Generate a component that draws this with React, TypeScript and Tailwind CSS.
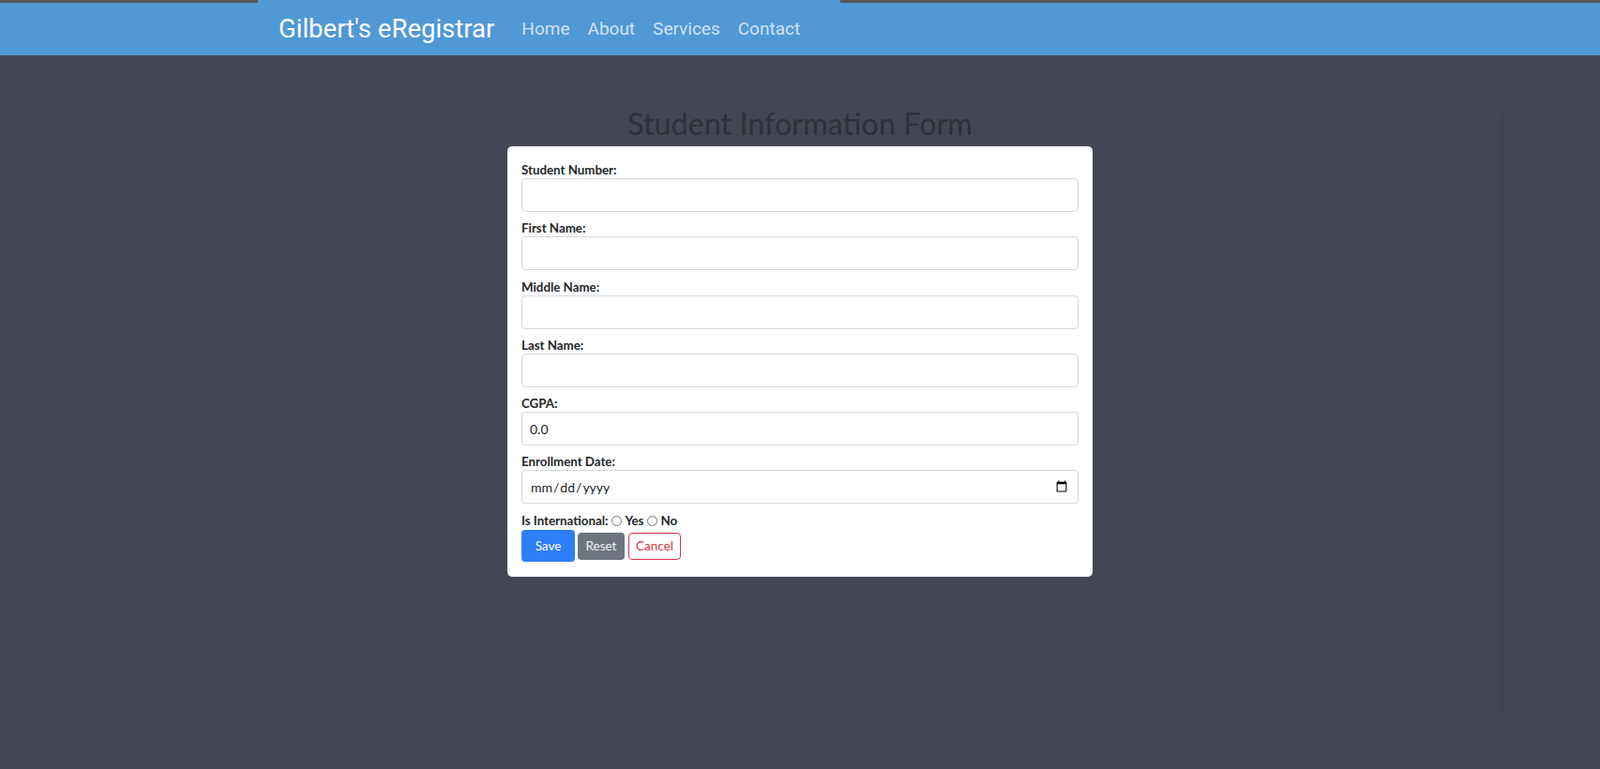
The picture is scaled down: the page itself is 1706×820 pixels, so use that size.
import React from 'react'

const fields = [
  { label: 'Student Number:', type: 'text', value: '' },
  { label: 'First Name:', type: 'text', value: '' },
  { label: 'Middle Name:', type: 'text', value: '' },
  { label: 'Last Name:', type: 'text', value: '' },
  { label: 'CGPA:', type: 'text', value: '0.0' },
  { label: 'Enrollment Date:', type: 'date', value: '' },
]

const formFont = { fontFamily: 'Lato, "Noto Sans", sans-serif' }

export default function App() {
  return (
    <div className="min-h-[820px] bg-[#454653] flex flex-col relative">
      {/* top strip */}
      <div className="flex h-[3px]">
        <div className="w-[275px] bg-[#545454]" />
        <div className="w-[621px] bg-[#5198d6]" />
        <div className="flex-1 bg-[#545454]" />
      </div>

      <nav className="h-[56px] bg-[#5198d6] flex items-center pl-[297px] font-['Roboto',sans-serif]">
        <span className="text-white text-[27.5px] leading-none mr-[29px]">Gilbert's eRegistrar</span>
        <div className="flex gap-[19px] text-[19px] text-[#d0e2f5]">
          <a href="#">Home</a>
          <a href="#">About</a>
          <a href="#">Services</a>
          <a href="#">Contact</a>
        </div>
      </nav>

      <main className="flex flex-col items-center">
        <h2
          className="mt-[55px] text-[32.4px] leading-[36px] text-[#2f3038] font-normal"
          style={formFont}
        >
          Student Information Form
        </h2>
        <form
          className="mt-[6px] w-[624px] bg-white rounded-[5px] px-[15px] pt-[16px] pb-[16px] text-[#212529]"
          style={formFont}
        >
          {fields.map((f) => (
            <div key={f.label} className="mb-[8.3px]">
              <label className="block text-[13.3px] font-bold leading-[16px] pt-[1px] mb-[1px]">
                {f.label}
              </label>
              <input
                type={f.type}
                defaultValue={f.value}
                className="w-full h-[36px] border border-[#d5d8dc] rounded-[4px] px-[8px] text-[14px] text-[#212529] outline-none"
              />
            </div>
          ))}
          <div className="flex items-center text-[13.3px] font-bold leading-[17px] pt-[1px]">
            <span>Is International:</span>
            <input type="radio" name="intl" className="w-[11px] h-[11px] ml-[4px] mr-[3px]" />
            <span>Yes</span>
            <input type="radio" name="intl" className="w-[11px] h-[11px] ml-[4px] mr-[3px]" />
            <span>No</span>
          </div>
          <div className="flex items-start gap-[3px] mt-[1px] text-[13.5px]">
            <button type="button" className="w-[57px] h-[34px] rounded-[4px] bg-[#2d7ef7] text-white">
              Save
            </button>
            <button type="button" className="w-[50px] h-[29px] mt-[3px] rounded-[4px] bg-[#6c757d] text-[#f1f1f1]">
              Reset
            </button>
            <button type="button" className="w-[56px] h-[29px] mt-[3px] ml-[1px] rounded-[4px] border border-[#dc3545] text-[#dc3545] bg-white">
              Cancel
            </button>
          </div>
        </form>
      </main>

      {/* faint shadow column at right */}
      <div className="absolute left-[1600px] top-[123px] w-[3px] h-[639px] bg-[#40414c]" />
    </div>
  )
}
